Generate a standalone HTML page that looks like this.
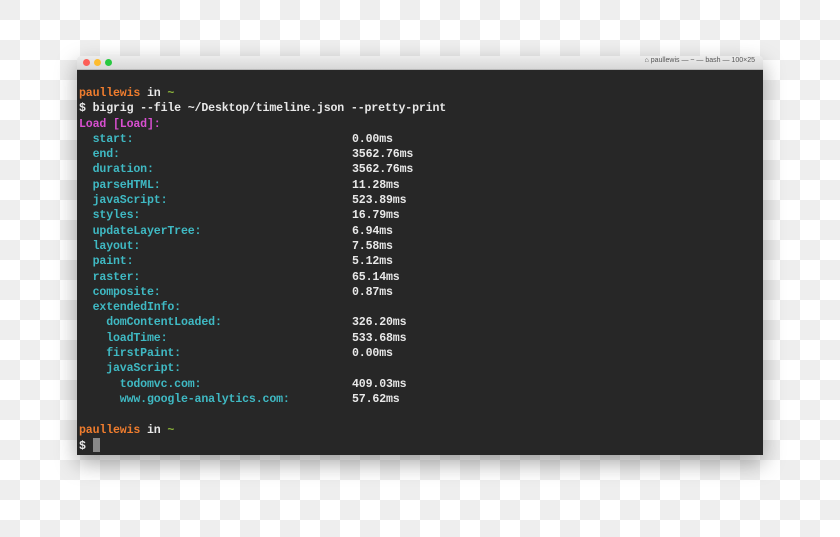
<!DOCTYPE html>
<html><head><style>
html,body{margin:0;padding:0;}
body{width:840px;height:537px;overflow:hidden;position:relative;
background-color:#fff;
background-image:linear-gradient(45deg,#eee 25%,transparent 25%,transparent 75%,#eee 75%),linear-gradient(45deg,#eee 25%,transparent 25%,transparent 75%,#eee 75%);
background-size:40px 40px;background-position:20px 0,0 20px;}
.win{position:absolute;left:77px;top:56px;width:686px;height:399px;box-shadow:0 8px 22px rgba(0,0,0,.35);border-radius:4px 4px 0 0;overflow:hidden;}
.tb{height:13px;background:linear-gradient(#ececec,#d8d8d8);position:relative;border-bottom:1px solid #b8b8b8;}
.d{position:absolute;top:3px;width:7px;height:7px;border-radius:50%;}
.tt{position:absolute;right:8px;top:1px;font:7px "Liberation Sans",sans-serif;color:#555;}
.term{background:#272727;height:385px;position:relative;}
.txt{position:absolute;left:2px;top:16px;font:bold 11.6px/15.3px "Liberation Mono",monospace;color:#e8e8e8;letter-spacing:-0.16px}
.l{height:15.3px;position:relative;white-space:pre}
.v{position:absolute;left:273px;top:0;color:#e8e8e8}
.o{color:#f07d2e}.g{color:#8bb33a}.m{color:#d84fd0}.c{color:#3fb9c3}
.cur{display:inline-block;width:7px;height:14px;background:#888;vertical-align:-3px}
</style></head><body>
<div class="win">
<div class="tb"><div class="d" style="left:6px;background:#fc5f57"></div><div class="d" style="left:17px;background:#fdbc2e"></div><div class="d" style="left:28px;background:#28c840"></div>
<div class="tt">⌂ paullewis — ~ — bash — 100×25</div></div>
<div class="term"><div class="txt">
<div class="l"><span class="o">paullewis</span> in <span class="g">~</span></div>
<div class="l">$ bigrig --file ~/Desktop/timeline.json --pretty-print</div>
<div class="l"><span class="m">Load [Load]:</span></div>
<div class="l c">  start:<span class="v">0.00ms</span></div>
<div class="l c">  end:<span class="v">3562.76ms</span></div>
<div class="l c">  duration:<span class="v">3562.76ms</span></div>
<div class="l c">  parseHTML:<span class="v">11.28ms</span></div>
<div class="l c">  javaScript:<span class="v">523.89ms</span></div>
<div class="l c">  styles:<span class="v">16.79ms</span></div>
<div class="l c">  updateLayerTree:<span class="v">6.94ms</span></div>
<div class="l c">  layout:<span class="v">7.58ms</span></div>
<div class="l c">  paint:<span class="v">5.12ms</span></div>
<div class="l c">  raster:<span class="v">65.14ms</span></div>
<div class="l c">  composite:<span class="v">0.87ms</span></div>
<div class="l c">  extendedInfo:</div>
<div class="l c">    domContentLoaded:<span class="v">326.20ms</span></div>
<div class="l c">    loadTime:<span class="v">533.68ms</span></div>
<div class="l c">    firstPaint:<span class="v">0.00ms</span></div>
<div class="l c">    javaScript:</div>
<div class="l c">      todomvc.com:<span class="v">409.03ms</span></div>
<div class="l c">      www.google-analytics.com:<span class="v">57.62ms</span></div>
<div class="l"> </div>
<div class="l"><span class="o">paullewis</span> in <span class="g">~</span></div>
<div class="l">$ <span class="cur"></span></div>
</div></div>
</div>
</body></html>
